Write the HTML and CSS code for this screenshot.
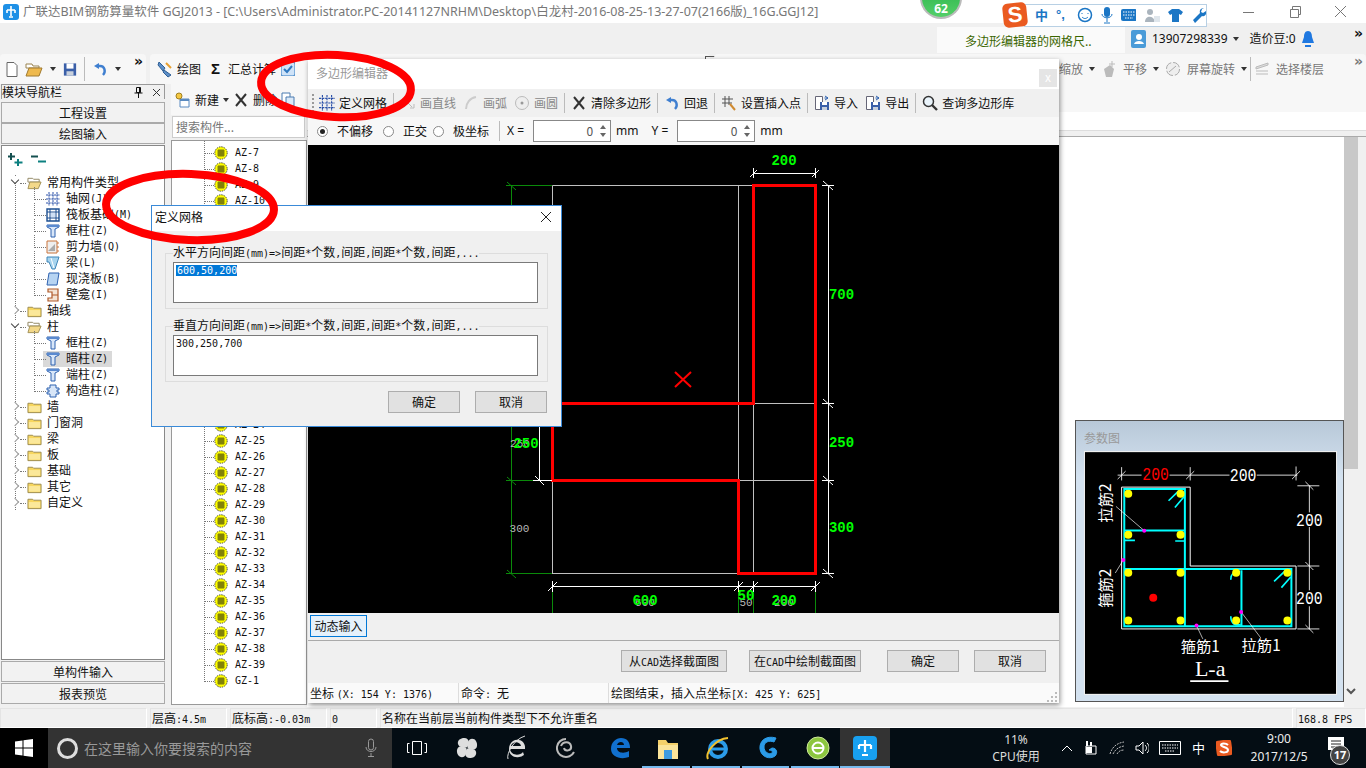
FILE: index.html
```html
<!DOCTYPE html>
<html lang="zh-CN">
<head>
  <meta charset="UTF-8">
  <title>广联达BIM钢筋算量软件 GGJ2013</title>
  <link rel="stylesheet" href="styles.css">
</head>
<body>
<!-- shared icons -->
<svg class="defs" width="0" height="0">
  <symbol id="i-az" viewBox="0 0 14 14"><circle cx="7" cy="7" r="6.2" fill="#ffff00" stroke="#444" stroke-dasharray="1.4 1"/><path d="M3.5 5h7M3.5 7h7M3.5 9h7M5 3.5v7M7 3.5v7M9 3.5v7" stroke="#111" stroke-width="1.1" stroke-dasharray="1 1"/></symbol>
  <symbol id="i-folder" viewBox="0 0 16 14"><path d="M1 3h5l1 1h8v9H1z" fill="#f7d65e" stroke="#9a8a50"/><path d="M2 6h12v6H2z" fill="#fbe89a"/></symbol>
  <symbol id="i-folder-open" viewBox="0 0 16 14"><path d="M1 2h5l1 1h6v3H1z" fill="#fff" stroke="#8f8460"/><path d="M1 13L3 6h12l-3 7z" fill="#f3d889" stroke="#a08f55"/></symbol>
  <symbol id="i-col" viewBox="0 0 14 14"><path d="M1 1h12v2L9 5v8H5V5L1 3z" fill="#d8e6f8" stroke="#2f62b0"/><path d="M1 1h12v2H1z" fill="#5a8ad0"/></symbol>
  <symbol id="i-grid" viewBox="0 0 14 14"><path d="M0 3h14M0 7h14M0 11h14M3 0v14M7 0v14M11 0v14" stroke="#2a50a8" stroke-dasharray="2 .7"/></symbol>
  <symbol id="i-raft" viewBox="0 0 14 14"><path d="M1 1h12v12H1z" fill="none" stroke="#1d4f91" stroke-width="1.4"/><path d="M4 1v12M10 1v12M1 4h12M1 10h12" stroke="#1d4f91"/><path d="M5 5h4v4H5z" fill="#cfe0f5"/></symbol>
  <symbol id="i-wall" viewBox="0 0 14 14"><path d="M1 1h10v12H1z" fill="#eee" stroke="#c9743c"/><path d="M2 11l7-7v7z" fill="#aaa"/><path d="M11 3h2M11 7h2M11 11h2" stroke="#c9743c"/></symbol>
  <symbol id="i-beam" viewBox="0 0 14 14"><path d="M1 1h12L9 13H6L3 6H1z" fill="#a8d4ee" stroke="#3f86b8"/><path d="M5 2l3 10" stroke="#fff"/></symbol>
  <symbol id="i-slab" viewBox="0 0 14 14"><path d="M3 1h10l-2 12H1z" fill="#b7d4f2" stroke="#2f62b0"/></symbol>
  <symbol id="i-niche" viewBox="0 0 14 14"><path d="M2 1h10v12H2v-3h4V4H2z" fill="#f4e4d4" stroke="#b05a2a" stroke-width="1.2"/><path d="M6 7h6" stroke="#b05a2a"/></symbol>
  <symbol id="i-gz" viewBox="0 0 14 14"><path d="M4 1h6v3h3v2h-2v2h2v2h-3v3H4v-3H1V8h2V6H1V4h3z" fill="#d8e6f8" stroke="#2f62b0"/></symbol>
  <symbol id="i-logo" viewBox="0 0 16 16"><rect width="16" height="16" rx="3" fill="#1e90e6"/><path d="M8 2v10M4 6h8M4 6v3M12 6v3M6 13h4" stroke="#fff" stroke-width="1.6" fill="none"/></symbol>
  <symbol id="i-undo" viewBox="0 0 16 16"><path d="M11 14c3-3 2-9-3-9H5" fill="none" stroke="#3f7fd0" stroke-width="2.4"/><path d="M2 5l5-3v6z" fill="#3f7fd0"/></symbol>
  <symbol id="i-x" viewBox="0 0 16 16"><path d="M3 2l10 12M13 2L3 14" stroke="#333" stroke-width="2"/></symbol>
  <symbol id="i-save" viewBox="0 0 16 16"><path d="M1 1h14v14H1z" fill="#3a5fa8"/><path d="M4 1h8v6H4z" fill="#fff"/><path d="M4 10h8v5H4z" fill="#c8d0dc"/></symbol>
  <symbol id="i-disk" viewBox="0 0 16 16"><path d="M1.5 1.5h7v13h-7z" fill="#fff" stroke="#667"/><path d="M6 7h9v8H6z" fill="#3a5fa8"/><path d="M8 7h5v3H8z" fill="#fff"/><path d="M8 12h5v3H8z" fill="#c8d0dc"/><path d="M11 1l3 2-3 2M14 3h-3.500" fill="none" stroke="#2f62b0"/></symbol>
</svg>

<div class="screen">
  <div class="titlebar">
    <svg class="title-logo" width="16" height="16"><use href="#i-logo"/></svg>
    <span class="title-text">广联达BIM钢筋算量软件 GGJ2013 - [C:\Users\Administrator.PC-20141127NRHM\Desktop\白龙村-2016-08-25-13-27-07(2166版)_16G.GGJ12]</span>
    <div class="win-ctrls">
      <svg width="14" height="14"><path d="M1 7.5h11" stroke="#777"/></svg>
      <svg width="14" height="14"><path d="M2.5 4.5h8v8h-8zM4.5 4V1.5h8v8H11" fill="none" stroke="#777"/></svg>
      <svg width="14" height="14"><path d="M1 1l11 11M12 1L1 12" stroke="#777"/></svg>
    </div>
  </div>

  <div class="menuband">
    <div class="hint">多边形编辑器的网格尺..</div>
    <div class="account">
      <svg width="16" height="18"><rect width="15" height="18" rx="2" fill="#4a9bd8"/><circle cx="8" cy="7" r="3" fill="#fff"/><path d="M3 14c1-4 9-4 10 0z" fill="#fff"/></svg>
      <span>13907298339</span><i class="caret"></i><span class="beans">造价豆:0</span>
      <svg width="14" height="18"><path d="M7 1c3 0 4 3 4 6l2 6H1l2-6c0-3 1-6 4-6z" fill="#1f78e0"/><path d="M4 15h6v2H4z" fill="#1f78e0"/></svg>
    </div>
    <span class="more">»</span>
  </div>

  <div class="toolbars">
    <div class="tb-left">
      <svg width="12" height="15"><path d="M1 .5h7l3 3v11H1z" fill="#fff" stroke="#666"/></svg>
      <svg width="18" height="15"><path d="M1 2h6l1 2h6v2H1z" fill="#fff" stroke="#9a8450"/><path d="M1 14l3-8h13l-3 8z" fill="#eeb94e" stroke="#a07a30"/></svg>
      <i class="caret"></i>
      <svg width="14" height="15"><use href="#i-save"/></svg>
      <i class="sep tall"></i>
      <svg width="16" height="16"><use href="#i-undo"/></svg>
      <i class="caret"></i>
      <span class="more small">»</span>
    </div>
    <div class="tb-main">
      <svg width="18" height="18"><path d="M3 2l6 6-2 3-5-6zM8 10l7 5-3 2-5-5z" fill="#5d8fc8" stroke="#2f5f95"/><path d="M10 3l5 5" stroke="#e8a030" stroke-width="2"/></svg>
      <span class="tb-draw">绘图</span>
      <b class="sigma">Σ</b>
      <span>汇总计算</span>
      <svg width="14" height="14"><rect width="14" height="14" rx="2" fill="#cfe3f8" stroke="#2f78c0"/><path d="M3 7l3 3 5-6" stroke="#2f78c0" stroke-width="2" fill="none"/></svg>
      <span class="tb-box"></span>
    </div>
    <div class="tb-right">
      <span>缩放</span><i class="caret"></i>
      <svg width="16" height="18"><path d="M5 17L3 9l6-4 4 4-2 8z" fill="#bbb"/><path d="M11 1v6M8 4h6" stroke="#bbb"/></svg>
      <span>平移</span><i class="caret"></i>
      <svg width="16" height="16"><circle cx="8" cy="8" r="6.5" fill="#eee" stroke="#aaa" stroke-dasharray="8 2"/><path d="M4 11l7-6" stroke="#aaa"/></svg>
      <span>屏幕旋转</span><i class="caret"></i>
      <i class="sep tall"></i>
      <svg width="16" height="16"><path d="M2 6l12-4v2L2 8zM2 10h12M2 13h12" stroke="#bbb" fill="#ddd"/></svg>
      <span>选择楼层</span>
      <span class="more small">»</span>
    </div>
  </div>

  <div class="workspace">
    <aside class="nav">
      <div class="nav-head">
        <span>模块导航栏</span>
        <span class="pin">
          <svg width="9" height="11"><path d="M2.500 .5h4v5h-4zM.5 6h8M4.500 6v5" fill="none" stroke="#111"/><path d="M5 1h1v4H5z" fill="#111"/></svg>
          <svg width="9" height="9"><path d="M1 1l7 7M8 1L1 8" stroke="#333"/></svg>
        </span>
      </div>
      <div class="nav-btn first">工程设置</div>
      <div class="nav-btn">绘图输入</div>
      <div class="nav-tree">
        <div class="plusminus">
          <svg width="16" height="14"><path d="M4 1v7M1 4.5h7" stroke="#145050" stroke-width="2"/><path d="M11 7v7M7.5 10.5h8" stroke="#0d8080" stroke-width="2"/></svg>
          <svg width="17" height="14"><path d="M1 4.5h7" stroke="#145050" stroke-width="2"/><path d="M8 9.5h8" stroke="#0d8080" stroke-width="2"/></svg>
        </div>
        <ul class="tree">
          <li class="n1"><i class="chev open"></i><svg class="ic"><use href="#i-folder-open"/></svg>常用构件类型</li>
          <li class="n2"><svg class="ic"><use href="#i-grid"/></svg>轴网<span class="lat">(J)</span></li>
          <li class="n2"><svg class="ic"><use href="#i-raft"/></svg>筏板基础<span class="lat">(M)</span></li>
          <li class="n2"><svg class="ic"><use href="#i-col"/></svg>框柱<span class="lat">(Z)</span></li>
          <li class="n2"><svg class="ic"><use href="#i-wall"/></svg>剪力墙<span class="lat">(Q)</span></li>
          <li class="n2"><svg class="ic"><use href="#i-beam"/></svg>梁<span class="lat">(L)</span></li>
          <li class="n2"><svg class="ic"><use href="#i-slab"/></svg>现浇板<span class="lat">(B)</span></li>
          <li class="n2"><svg class="ic"><use href="#i-niche"/></svg>壁龛<span class="lat">(I)</span></li>
          <li class="n1"><i class="chev"></i><svg class="ic"><use href="#i-folder"/></svg>轴线</li>
          <li class="n1"><i class="chev open"></i><svg class="ic"><use href="#i-folder-open"/></svg>柱</li>
          <li class="n2"><svg class="ic"><use href="#i-col"/></svg>框柱<span class="lat">(Z)</span></li>
          <li class="n2 selected"><svg class="ic"><use href="#i-col"/></svg>暗柱<span class="lat">(Z)</span></li>
          <li class="n2"><svg class="ic"><use href="#i-col"/></svg>端柱<span class="lat">(Z)</span></li>
          <li class="n2"><svg class="ic"><use href="#i-gz"/></svg>构造柱<span class="lat">(Z)</span></li>
          <li class="n1"><i class="chev"></i><svg class="ic"><use href="#i-folder"/></svg>墙</li>
          <li class="n1"><i class="chev"></i><svg class="ic"><use href="#i-folder"/></svg>门窗洞</li>
          <li class="n1"><i class="chev"></i><svg class="ic"><use href="#i-folder"/></svg>梁</li>
          <li class="n1"><i class="chev"></i><svg class="ic"><use href="#i-folder"/></svg>板</li>
          <li class="n1"><i class="chev"></i><svg class="ic"><use href="#i-folder"/></svg>基础</li>
          <li class="n1"><i class="chev"></i><svg class="ic"><use href="#i-folder"/></svg>其它</li>
          <li class="n1"><i class="chev"></i><svg class="ic"><use href="#i-folder"/></svg>自定义</li>
        </ul>
      </div>
      <div class="nav-btn bottom">单构件输入</div>
      <div class="nav-btn bottom">报表预览</div>
    </aside>

    <section class="comps">
      <div class="comp-tools">
        <svg width="16" height="16"><path d="M5 7h9v8H5z" fill="#fff" stroke="#5a8ac0"/><path d="M5 7h9v2H5z" fill="#5a8ac0"/><circle cx="4" cy="4" r="3" fill="#f5c842" stroke="#a08020"/></svg>
        <span>新建</span><i class="caret"></i>
        <svg width="16" height="16"><use href="#i-x"/></svg>
        <span>删除</span>
        <svg width="14" height="15"><path d="M1 1h8v10H1z" fill="#fff" stroke="#4a7ab0"/><path d="M5 5h8v9H5z" fill="#dbe8f7" stroke="#4a7ab0"/></svg>
      </div>
      <div class="search">搜索构件...</div>
      <ul class="az-list">
        <li><svg class="az"><use href="#i-az"/></svg>AZ-7</li>
        <li><svg class="az"><use href="#i-az"/></svg>AZ-8</li>
        <li><svg class="az"><use href="#i-az"/></svg>AZ-9</li>
        <li><svg class="az"><use href="#i-az"/></svg>AZ-10</li>
        <li><svg class="az"><use href="#i-az"/></svg>AZ-11</li>
        <li><svg class="az"><use href="#i-az"/></svg>AZ-12</li>
        <li><svg class="az"><use href="#i-az"/></svg>AZ-13</li>
        <li><svg class="az"><use href="#i-az"/></svg>AZ-14</li>
        <li><svg class="az"><use href="#i-az"/></svg>AZ-15</li>
        <li><svg class="az"><use href="#i-az"/></svg>AZ-16</li>
        <li><svg class="az"><use href="#i-az"/></svg>AZ-17</li>
        <li><svg class="az"><use href="#i-az"/></svg>AZ-18</li>
        <li><svg class="az"><use href="#i-az"/></svg>AZ-19</li>
        <li><svg class="az"><use href="#i-az"/></svg>AZ-20</li>
        <li><svg class="az"><use href="#i-az"/></svg>AZ-21</li>
        <li><svg class="az"><use href="#i-az"/></svg>AZ-22</li>
        <li><svg class="az"><use href="#i-az"/></svg>AZ-23</li>
        <li><svg class="az"><use href="#i-az"/></svg>AZ-24</li>
        <li><svg class="az"><use href="#i-az"/></svg>AZ-25</li>
        <li><svg class="az"><use href="#i-az"/></svg>AZ-26</li>
        <li><svg class="az"><use href="#i-az"/></svg>AZ-27</li>
        <li><svg class="az"><use href="#i-az"/></svg>AZ-28</li>
        <li><svg class="az"><use href="#i-az"/></svg>AZ-29</li>
        <li><svg class="az"><use href="#i-az"/></svg>AZ-30</li>
        <li><svg class="az"><use href="#i-az"/></svg>AZ-31</li>
        <li><svg class="az"><use href="#i-az"/></svg>AZ-32</li>
        <li><svg class="az"><use href="#i-az"/></svg>AZ-33</li>
        <li><svg class="az"><use href="#i-az"/></svg>AZ-34</li>
        <li><svg class="az"><use href="#i-az"/></svg>AZ-35</li>
        <li><svg class="az"><use href="#i-az"/></svg>AZ-36</li>
        <li><svg class="az"><use href="#i-az"/></svg>AZ-37</li>
        <li><svg class="az"><use href="#i-az"/></svg>AZ-38</li>
        <li><svg class="az"><use href="#i-az"/></svg>AZ-39</li>
        <li><svg class="az"><use href="#i-az"/></svg>GZ-1</li>
      </ul>
    </section>

    <section class="view">
      <div class="view-band"></div>
      <div class="view-strip"></div>
      <div class="view-main">
        <div class="view-white"></div>
        <div class="scroll"><div class="thumb"></div><svg width="14" height="10"><path d="M3 2l4 4 4-4" fill="none" stroke="#555" stroke-width="2"/></svg></div>
      </div>
    </section>
  </div>

  <div class="statusbar">
    <span class="cell c-empty"></span>
    <span class="cell c-h">层高<span class="lat">:4.5m</span></span>
    <span class="cell c-b">底标高<span class="lat">:-0.03m</span></span>
    <span class="cell c-z"><span class="lat">0</span></span>
    <span class="cell c-msg">名称在当前层当前构件类型下不允许重名</span>
    <span class="cell c-fps"><span class="lat">168.8 FPS</span></span>
  </div>

  <div class="taskbar">
    <div class="start"><svg width="18" height="18"><path d="M0 2.5l7.5-1v7H0zM8.5 1.300l9.500-1.300v8.500H8.500zM0 9.500h7.500v7l-7.500-1zM8.500 9.500H18V18l-9.500-1.300z" fill="#fff"/></svg></div>
    <div class="task-search">
      <i class="cortana"></i>
      <span>在这里输入你要搜索的内容</span>
      <svg width="12" height="20"><rect x="3.5" y="1" width="5" height="11" rx="2.5" fill="none" stroke="#999"/><path d="M1 9c0 6 10 6 10 0M6 15v3M3 18.5h6" fill="none" stroke="#999"/></svg>
    </div>
    <div class="task-icons">
      <span class="tk"><svg width="20" height="14"><path d="M5.500 .5h9v13h-9zM2.500 2.500H.5v9h2M17.500 2.500h2v9h-2" fill="none" stroke="#fff"/></svg></span>
      <span class="tk"><svg width="22" height="22" viewBox="0 0 24 24" fill="#dedede">
        <path id="blade" d="M11.500 11.500C7 12 2 10.500 2 6.500S6 1 9 1s5 2 5 5c0 2-1 4-2.500 5.500z"/>
        <path d="M12.500 11.500C12 7 13.500 2 17.500 2S23 6 23 9s-2 5-5 5c-2 0-4-1-5.500-2.500z"/>
        <path d="M12.500 12.500C17 12 22 13.500 22 17.500S18 23 15 23s-5-2-5-5c0-2 1-4 2.500-5.500z"/>
        <path d="M11.500 12.500C12 17 10.500 22 6.500 22S1 18 1 15s2-5 5-5c2 0 4 1 5.500 2.500z"/>
      </svg></span>
      <span class="tk"><svg width="22" height="26"><path d="M18 17c-3 4-12 4-13-3h15c1-8-7-11-12-8-3 2-4 5-4 8 0 6 5 9 10 8 2 0 3-1 5-2zM6 11c1-5 9-5 10 0z" fill="#ddd"/><path d="M3 24C1 19 9 4 20 1" fill="none" stroke="#ddd"/></svg></span>
      <span class="tk"><svg width="20" height="24"><path d="M10 3a9 9 0 1 0 8 13M5 10c2-5 9-5 10 0s-6 6-7 2" fill="none" stroke="#bbb" stroke-width="2"/></svg></span>
      <span class="tk nudge"><svg width="22" height="24"><path d="M2 13C2 6 7 2 12 2c6 0 9 4 9 10H8c0 5 7 6 12 3v6c-8 3-18 0-18-8zM8 9h7c0-4-6-4-7 0z" fill="#1170cf"/></svg></span>
      <span class="tk on"><svg width="24" height="24"><path d="M2 4h8l2 3h10v16H2z" fill="#f4d06a"/><path d="M2 9h20v14H2z" fill="#fbe49a"/><path d="M8 14h8v9H8z" fill="#3f9be0"/></svg></span>
      <span class="tk on"><svg width="26" height="26"><circle cx="13" cy="14" r="8" fill="none" stroke="#2b9be8" stroke-width="4"/><path d="M6 14h14" stroke="#2b9be8" stroke-width="3"/><path d="M3 24C0 18 10 4 23 3" fill="none" stroke="#f2c230" stroke-width="2"/></svg></span>
      <span class="tk on"><svg width="24" height="26"><path d="M20 3C10 0 3 6 4 14s10 11 15 7c3-3 2-8-3-8l-3 2c3 0 4 2 3 3-3 2-8-1-8-6s5-7 10-5z" fill="#2b9be8" stroke="#2b9be8"/></svg></span>
      <span class="tk on"><svg width="26" height="26"><circle cx="13" cy="13" r="11" fill="#8cc63f" stroke="#cde79a"/><circle cx="13" cy="13" r="5.500" fill="none" stroke="#fff" stroke-width="2"/><path d="M7 13h12" stroke="#fff" stroke-width="2"/></svg></span>
      <span class="tk active"><svg width="24" height="24"><rect width="24" height="24" rx="4" fill="#18a0f0"/><path d="M12 4v12M6 9h12M6 9v4M18 9v4M9 19h6" stroke="#fff" stroke-width="2.2" fill="none"/></svg></span>
    </div>
    <div class="cpu">11%<br>CPU使用</div>
    <div class="tray">
      <svg width="12" height="8"><path d="M1 7l5-5 5 5" fill="none" stroke="#fff"/></svg>
      <svg width="16" height="14"><path d="M3 5h10v8H3z" fill="none" stroke="#fff"/><path d="M3 6h6v6H3zM3 0h2v5H3zM7 1h2v4H7z" fill="#fff"/></svg>
      <svg width="16" height="14"><path d="M1 13C3 6 8 2 15 1M4 13c2-4 5-7 11-8M8 13c1-2 3-4 7-4" fill="none" stroke="#bbb" stroke-dasharray="2 1"/></svg>
      <svg width="14" height="14"><path d="M1 5h3l4-4v12L4 9H1z" fill="none" stroke="#fff"/><path d="M10 4c2 2 2 4 0 6M12 2c3 3 3 7 0 10" fill="none" stroke="#fff"/></svg>
      <svg width="22" height="14"><path d="M.5 .5h21v13H.5z" fill="none" stroke="#fff"/><path d="M3 4h16M3 7h16M6 10h10" stroke="#fff" stroke-dasharray="1.5 1"/></svg>
      <span class="tray-zh">中</span>
      <svg width="16" height="16"><rect width="16" height="16" rx="3" fill="#ea5a20" transform="rotate(-8 8 8)"/><path d="M12 5c-2-2-7-2-7 0s7 2 7 5-6 3-8 1" fill="none" stroke="#fff" stroke-width="2"/></svg>
    </div>
    <div class="clock">9:00<br>2017/12/5</div>
    <div class="notify">
      <svg width="16" height="16"><path d="M0 0h16v13H0z" fill="#fff"/><path d="M3 4h10M3 7h10M3 10h7" stroke="#222"/></svg>
      <b class="notify-n">17</b>
    </div>
  </div>

  <!-- floating parameter picture -->
  <div class="param">
    <div class="param-title">参数图</div>
    <svg class="param-fig" width="251" height="242" viewBox="42 107 754 726">
      <rect x="42" y="107" width="754" height="726" fill="#000"/>
      <path d="M152 212H358V449H676V638H152Z" fill="none" stroke="#fff" stroke-width="3"/>
      <path d="M160 218H342V458H662V630H160ZM160 342H342M160 458H342M342 458V630M512 462V630" fill="none" stroke="#00ffff" stroke-width="6"/>
      <path d="M293 253L325 222M312 273L340 240M610 495L645 462M632 514L660 482M160 372H192M313 374H340M480 490C480 470 490 465 508 465M480 600C480 625 495 628 510 625" fill="none" stroke="#00ffff" stroke-width="5"/>
      <g fill="#ffff00">
        <circle cx="172" cy="232" r="12"/><circle cx="329" cy="232" r="12"/><circle cx="172" cy="355" r="12"/><circle cx="329" cy="355" r="12"/>
        <circle cx="172" cy="469" r="12"/><circle cx="329" cy="469" r="12"/><circle cx="496" cy="469" r="12"/><circle cx="650" cy="469" r="12"/>
        <circle cx="172" cy="613" r="12"/><circle cx="329" cy="613" r="12"/><circle cx="496" cy="613" r="12"/><circle cx="650" cy="613" r="12"/>
      </g>
      <circle cx="247" cy="544" r="12" fill="#ff0000"/>
      <path d="M135 270L220 343M157 431L133 470M377 628L396 668M511 587L570 665" stroke="#fff" stroke-width="2"/>
      <g fill="#ff00ff"><circle cx="220" cy="343" r="6"/><circle cx="157" cy="431" r="6"/><circle cx="377" cy="628" r="6"/><circle cx="511" cy="587" r="6"/></g>
      <path d="M140 176H212M296 176H476M558 176H680M152 152V192M358 152V192M676 150V192M140 188L164 164M346 188L370 164M664 188L688 164M716 208V288M716 332V522M716 570V638M680 208H746M680 449H746M680 638H746M704 196L728 220M704 437L728 461M704 626L728 650" fill="none" stroke="#fff" stroke-width="2.5"/>
      <path d="M358 795H473" stroke="#fff" stroke-width="5"/>
      <g class="fig-num" fill="#fff" text-anchor="middle">
        <text x="254" y="190" fill="#ff0000" textLength="80" lengthAdjust="spacingAndGlyphs">200</text>
        <text x="517" y="194" textLength="80" lengthAdjust="spacingAndGlyphs">200</text>
        <text x="716" y="328" textLength="80" lengthAdjust="spacingAndGlyphs">200</text>
        <text x="716" y="564" textLength="80" lengthAdjust="spacingAndGlyphs">200</text>
      </g>
      <g class="fig-cjk" fill="#fff" text-anchor="middle">
        <text x="388" y="706">箍筋1</text>
        <text x="571" y="704">拉筋1</text>
        <text transform="translate(120 260) rotate(-90)">拉筋2</text>
        <text transform="translate(120 516) rotate(-90)">箍筋2</text>
      </g>
      <text class="fig-label" x="418" y="780" fill="#fff" text-anchor="middle">L-a</text>
    </svg>
  </div>

  <!-- polygon editor window -->
  <div class="editor">
    <div class="ed-title"><span>多边形编辑器</span><span class="ed-close">x</span></div>
    <div class="ed-tools">
      <i class="grip"></i>
      <span class="tool"><svg width="16" height="16"><use href="#i-grid"/></svg>定义网格</span>
      <i class="sep"></i>
      <span class="tool off"><svg width="16" height="16"><path d="M3 3l9 9M10 13h4v-4" fill="none" stroke="#bbb"/></svg>画直线</span>
      <span class="tool off"><svg width="16" height="16"><path d="M3 14C3 8 7 3 13 2" fill="none" stroke="#ccc" stroke-width="2"/></svg>画弧</span>
      <span class="tool off"><svg width="16" height="16"><circle cx="8" cy="8" r="6.5" fill="#eee" stroke="#bbb"/><circle cx="8" cy="8" r="1.5" fill="#999"/></svg>画圆</span>
      <i class="sep"></i>
      <span class="tool"><svg width="16" height="16"><use href="#i-x"/></svg>清除多边形</span>
      <i class="sep"></i>
      <span class="tool"><svg width="16" height="16"><use href="#i-undo"/></svg>回退</span>
      <i class="sep"></i>
      <span class="tool"><svg width="16" height="16"><path d="M4 1v11M8 1v9M1 4h11M1 8h10" stroke="#555"/><path d="M9 9l5 6" stroke="#d08a30" stroke-width="2"/></svg>设置插入点</span>
      <i class="sep"></i>
      <span class="tool"><svg width="16" height="16"><use href="#i-disk"/></svg>导入</span>
      <span class="tool"><svg width="16" height="16"><use href="#i-disk"/></svg>导出</span>
      <i class="sep"></i>
      <span class="tool"><svg width="16" height="16"><circle cx="6.5" cy="6.5" r="5" fill="#eaf4fb" stroke="#333" stroke-width="1.5"/><path d="M10 10l5 5" stroke="#333" stroke-width="2.4"/></svg>查询多边形库</span>
    </div>
    <div class="ed-opts">
      <span class="radio on"></span><span class="opt">不偏移</span>
      <span class="radio"></span><span class="opt tight">正交</span>
      <span class="radio"></span><span class="opt">极坐标</span>
      <i class="sep"></i>
      <span class="xy">X =</span>
      <div class="spin">0<span class="spin-btns"><i class="up"></i><i class="down"></i></span></div>
      <span class="xy">mm</span>
      <span class="xy y-label">Y =</span>
      <div class="spin">0<span class="spin-btns"><i class="up"></i><i class="down"></i></span></div>
      <span class="xy">mm</span>
    </div>
    <svg class="ed-canvas" width="751" height="468" viewBox="308 145 751 468">
      <rect x="308" y="145" width="751" height="468" fill="#000"/>
      <path d="M511.5 185V573M506 185.5H552M506 480.5H539M506 573.5H552M552.5 590V613M738.5 590V613M753.5 590V613M815.5 590V613M507 182L516 190M507 477L516 485M507 570L516 578" stroke="#0a8a0a" fill="none"/>
      <path d="M552.5 185.5H753M552.5 185.5V573M738.5 185.5V573M753.5 403V573M552 573.5H739M739 480.5H815M753 403.5H815" stroke="#c0c0c0" fill="none"/>
      <path d="M753.5 185.5H815.5V573.5H738.5V480.5H552.5V403.5H753.5Z" stroke="#ff0000" stroke-width="3" fill="none"/>
      <path d="M753 173.5H815M753.5 168V178M815.5 168V178M750 177L757 170M812 177L819 170M828.5 185V573M822 185.5H834M822 403.5H834M822 480.5H834M822 573.5H834M823 181L833 190M823 399L833 408M823 476L833 485M823 569L833 578M552 586.5H815M552.5 581V592M738.5 581V592M753.5 581V592M815.5 581V592M548 591L557 582M734 591L743 582M749 591L758 582M811 591L820 582M539.5 427V480M533 480.5H552M535 476L544 485" stroke="#fff" fill="none"/>
      <path d="M675 372L691 387M691 372L675 387" stroke="#ff0000" stroke-width="2"/>
      <g class="dim-gray" fill="#b8b8b8" text-anchor="middle">
        <text x="520" y="447">250</text><text x="519.5" y="532">300</text><text x="645" y="606">600</text><text x="746" y="606">50</text><text x="784" y="606">200</text>
      </g>
      <g class="dim-green" fill="#00ff00" text-anchor="middle">
        <text x="784" y="165">200</text><text x="841.5" y="299">700</text><text x="841.5" y="447">250</text><text x="841.5" y="532">300</text>
        <text x="526" y="448">250</text><text x="645" y="605">600</text><text x="746" y="600">50</text><text x="784" y="605">200</text>
      </g>
    </svg>
    <div class="ed-dyn"><span class="dyn-btn">动态输入</span></div>
    <div class="ed-actions">
      <span class="btn b-cad1">从<span class="lat">CAD</span>选择截面图</span>
      <span class="btn b-cad2">在<span class="lat">CAD</span>中绘制截面图</span>
      <span class="btn b-ok">确定</span>
      <span class="btn b-ok">取消</span>
    </div>
    <div class="ed-status">
      <span class="cell e-a">坐标 <span class="lat">(X: 154 Y: 1376)</span></span>
      <span class="cell e-b">命令<span class="lat">: </span>无</span>
      <span class="cell e-c">绘图结束，插入点坐标<span class="lat">[X: 425 Y: 625]</span></span>
      <svg class="size-grip" width="11" height="11"><path d="M9 1h2v2H9zM5 5h2v2H5zM9 5h2v2H9zM1 9h2v2H1zM5 9h2v2H5zM9 9h2v2H9z" fill="#bbb"/></svg>
    </div>
  </div>

  <!-- define grid dialog -->
  <div class="dialog">
    <div class="dlg-title"><span>定义网格</span><svg width="12" height="12"><path d="M1 1l10 10M11 1L1 11" stroke="#222"/></svg></div>
    <div class="dlg-body">
      <fieldset class="grp">
        <legend>水平方向间距<span class="lat">(mm)=&gt;</span>间距<span class="lat">*</span>个数<span class="lat">,</span>间距<span class="lat">,</span>间距<span class="lat">*</span>个数<span class="lat">,</span>间距<span class="lat">,...</span></legend>
        <div class="area"><span class="picked">600,50,200</span></div>
      </fieldset>
      <fieldset class="grp">
        <legend>垂直方向间距<span class="lat">(mm)=&gt;</span>间距<span class="lat">*</span>个数<span class="lat">,</span>间距<span class="lat">,</span>间距<span class="lat">*</span>个数<span class="lat">,</span>间距<span class="lat">,...</span></legend>
        <div class="area">300,250,700</div>
      </fieldset>
      <div class="dlg-btns"><span class="btn b-ok">确定</span><span class="btn b-ok">取消</span></div>
    </div>
  </div>

  <!-- red marks drawn over the screenshot -->
  <svg class="marks" width="1366" height="768">
    <ellipse cx="336" cy="86" rx="75" ry="31" transform="rotate(3 336 86)"/>
    <ellipse cx="190" cy="207" rx="84" ry="33" transform="rotate(2 190 207)"/>
  </svg>

  <!-- desktop widgets above the window -->
  <div class="badge">62</div>
  <div class="ime">
    <span class="ime-s">S</span>
    <span class="ime-bar">
      <b>中</b><b class="ime-dot">°,</b>
      <svg class="ime-smile" width="16" height="16"><circle cx="8" cy="8" r="6.5" fill="none" stroke="#1b76c5" stroke-width="1.5"/><path d="M5 6v1M11 6v1M5 10c2 2 4 2 6 0" stroke="#1b76c5" fill="none"/></svg>
      <svg width="12" height="18"><rect x="3" y="1" width="6" height="10" rx="3" fill="#1b76c5"/><path d="M1 8c0 5 10 5 10 0M6 12v4M3 17h6" fill="none" stroke="#1b76c5"/></svg>
      <svg width="16" height="12"><rect width="16" height="12" rx="2" fill="#1b76c5"/><path d="M2 3h12M2 6h12M4 9h8" stroke="#fff" stroke-dasharray="1.5 1"/></svg>
      <svg width="16" height="16"><circle cx="6" cy="5" r="3" fill="#aab4bd"/><path d="M1 15c0-7 9-7 10 0z" fill="#aab4bd"/><path d="M10 9h6v6h-6z" fill="#dfe6ec"/></svg>
      <svg width="15" height="15"><path d="M4 1h7l4 3-2 3-2-1v8H4V6L2 7 0 4z" fill="#1b76c5"/></svg>
      <svg width="15" height="17"><path d="M13 1c-3 0-5 2-4 5L2 13l2 3 7-7c3 1 5-2 4-5l-3 2-2-1 1-3z" fill="#1b76c5"/></svg>
    </span>
  </div>
</div>
</body>
</html>
```

FILE: styles.css
```css
* { box-sizing: border-box; }
html, body { margin: 0; padding: 0; background: #f0f0f0; }
.defs { position: absolute; }
ul { list-style: none; margin: 0; padding: 0; }

.screen {
  position: relative;
  width: 1366px;
  height: 768px;
  overflow: hidden;
  display: flex;
  flex-direction: column;
  font-family: "DejaVu Sans Mono", "Noto Sans CJK SC", monospace;
  font-size: 12px;
  line-height: 16px;
  color: #111;
}
/* latin runs in the old bitmap look are half the width of a CJK glyph */
.lat { font-family: "DejaVu Sans Mono", monospace; font-size: 10px; }

/* title */
.titlebar {
  height: 23px;
  background: #fff;
  display: flex;
  align-items: center;
  flex: none;
}
.title-logo { margin: 0 4px 0 3px; }
.title-text {
  font-family: "Noto Sans", "Noto Sans CJK SC", sans-serif;
  font-size: 12.5px;
  color: #777;
  white-space: nowrap;
}
.win-ctrls {
  margin-left: auto;
  display: flex;
  gap: 32px;
  padding-right: 18px;
}

/* band above toolbars */
.menuband {
  height: 31px;
  flex: none;
  background: #f0f0f0;
  position: relative;
  display: flex;
  justify-content: flex-end;
  align-items: center;
}
.hint {
  width: 188px;
  height: 26px;
  background: #fafafa;
  color: #3a6600;
  padding: 6px 0 0 28px;
  font-family: "Noto Sans CJK SC", sans-serif;
  margin-top: 3px;
}
.account {
  display: flex;
  align-items: center;
  gap: 5px;
  margin-left: 6px;
  width: 235px;
  font-family: "Noto Sans", "Noto Sans CJK SC", sans-serif;
}
.beans { margin-left: 6px; }
.more {
  position: absolute;
  right: 3px;
  top: 4px;
  font-size: 14px;
  line-height: 12px;
  font-weight: bold;
  font-family: "DejaVu Sans", sans-serif;
}
.more.small { top: 1px; }
.caret {
  width: 0;
  height: 0;
  border: 3px solid transparent;
  border-top: 4px solid #333;
  border-bottom: 0;
  flex: none;
}
.sep {
  width: 1px;
  height: 20px;
  background: #bbb;
  flex: none;
}
.sep.tall { height: 24px; }

/* toolbars */
.toolbars {
  height: 30px;
  flex: none;
  display: flex;
  background: #f0f0f0;
  font-family: "Noto Sans CJK SC", sans-serif;
}
.tb-left, .tb-main, .tb-right {
  display: flex;
  align-items: center;
  background: #f7f7f7;
  border-radius: 4px 4px 0 0;
  position: relative;
}
.tb-left {
  width: 146px;
  padding-left: 6px;
  gap: 7px;
}
.tb-main {
  width: 560px;
  margin-left: 4px;
  padding-left: 6px;
  gap: 5px;
}
.sigma { margin-left: 5px; margin-right: 3px; font-family: "Liberation Sans", sans-serif; font-size: 15px; }
.tb-draw { margin-left: -2px; }
.tb-box {
  position: absolute;
  left: 555px;
  top: 2px;
  width: 62px;
  height: 12px;
  border: 1px solid #555;
  border-bottom: 0;
}
.tb-right {
  flex: 1;
  margin-left: 4px;
  justify-content: flex-end;
  gap: 6px;
  padding-right: 42px;
  color: #777;
}
.tb-right .sep { margin: 0 -3px; }

/* workspace */
.workspace {
  height: 623px;
  flex: none;
  display: flex;
  background: #f0f0f0;
}
.nav {
  width: 165px;
  flex: none;
  display: flex;
  flex-direction: column;
  padding: 0 0 3px 1px;
  font-family: "Noto Sans CJK SC", sans-serif;
}
.nav-head {
  height: 15px;
  display: flex;
  justify-content: space-between;
  border: 1px solid #999;
  border-bottom: 0;
  line-height: 13px;
  background: #f0f0f0;
  padding-right: 3px;
}
.pin { display: flex; align-items: center; gap: 9px; }
.nav-btn {
  height: 21px;
  flex: none;
  border: 1px solid #aaa;
  background: #f2f2f2;
  text-align: center;
  line-height: 20px;
}
.nav-btn.first { margin-top: 3px; }
.nav-btn.bottom { margin-top: 1px; }
.nav-tree {
  flex: 1;
  margin-top: 1px;
  background: #fff;
  border: 1px solid #888;
  overflow: hidden;
}
.plusminus {
  display: flex;
  gap: 7px;
  padding: 6px 0 0 5px;
  height: 29px;
}
.tree {
  font-family: "DejaVu Sans Mono", "Noto Sans CJK SC", monospace;
  background: repeating-linear-gradient(#777 0 1px, transparent 1px 2px) 13px 0 / 1px 100% no-repeat;
}
.tree li {
  height: 16px;
  display: flex;
  align-items: center;
  white-space: nowrap;
  position: relative;
}
.tree .n1 { padding-left: 25px; }
.tree .n2 { padding-left: 44px; }
.ic { width: 15px; height: 14px; margin-right: 5px; flex: none; }
.n2 .ic { width: 14px; height: 14px; margin-right: 6px; }
.n2::before {
  content: "";
  position: absolute;
  left: 32px;
  top: -4px;
  width: 11px;
  height: 12px;
  border-left: 1px dotted #777;
  border-bottom: 1px dotted #777;
}
.n1::before {
  content: "";
  position: absolute;
  left: 18px;
  top: 8px;
  width: 6px;
  border-bottom: 1px dotted #777;
}
.chev {
  position: absolute;
  left: 10px;
  top: 4px;
  width: 6px;
  height: 6px;
  background: #fff;
  border-right: 1.5px solid #999;
  border-bottom: 1.5px solid #999;
  transform: rotate(-45deg);
}
.chev.open { transform: rotate(45deg); border-color: #444; top: 2px; }
.selected { background: linear-gradient(#d9d9d9, #d9d9d9) 41px 0 / 69px 16px no-repeat; }

/* component list */
.comps {
  width: 136px;
  margin-left: 6px;
  padding-bottom: 2px;
  flex: none;
  display: flex;
  flex-direction: column;
  font-family: "Noto Sans CJK SC", sans-serif;
}
.comp-tools {
  height: 31px;
  display: flex;
  align-items: center;
  gap: 4px;
  padding-left: 4px;
  background: #f7f7f7;
}
.search {
  height: 22px;
  margin: 1px 2px 0 1px;
  padding: 2px 3px;
  background: #fff;
  border: 1px solid #ccc;
  color: #777;
}
.az-list {
  flex: 1;
  margin-top: 2px;
  background: #fff;
  border: 1px solid #999;
  padding-top: 4px;
  font-family: "DejaVu Sans Mono", monospace;
  font-size: 10px;
  overflow: hidden;
}
.az-list li {
  height: 16px;
  padding-left: 42px;
  display: flex;
  align-items: center;
  position: relative;
}
.az-list li::before {
  content: "";
  position: absolute;
  left: 32px;
  top: -8px;
  width: 9px;
  height: 16px;
  border-left: 1px dotted #777;
  border-bottom: 1px dotted #777;
}
.az { width: 14px; height: 14px; margin-right: 7px; flex: none; }

/* right view */
.view {
  flex: 1;
  display: flex;
  flex-direction: column;
  min-width: 0;
}
.view-band { height: 28px; background: #f7f7f7; }
.view-strip { height: 19px; background: #fff; border-bottom: 1px solid #ddd; }
.view-main {
  flex: 1;
  display: flex;
  margin-top: 5px;
  border-top: 1px solid #aaa;
}
.view-white { flex: 1; background: #fff; }
.scroll {
  width: 22px;
  padding: 0 8px 10px 0;
  background: #f0f0f0;
  display: flex;
  flex-direction: column;
  justify-content: space-between;
}
.thumb { height: 332px; background: #c8c8c8; }

/* status */
.statusbar {
  height: 21px;
  flex: none;
  display: flex;
  background: #f0f0f0;
  gap: 3px;
  padding-top: 1px;
  font-family: "Noto Sans CJK SC", sans-serif;
}
.cell {
  display: block;
  border: 1px solid #e4e4e4;
  border-right-color: #fff;
  border-bottom-color: #fff;
  line-height: 18px;
  padding-left: 1px;
  white-space: nowrap;
  overflow: hidden;
}
.c-empty { width: 147px; }
.c-h { width: 77px; }
.c-b { width: 97px; }
.c-z { width: 47px; }
.c-msg { flex: 1; }
.c-fps { width: 70px; }

/* taskbar */
.taskbar {
  height: 40px;
  flex: none;
  display: flex;
  align-items: center;
  background: #040d14;
  color: #fff;
}
.start {
  width: 48px;
  height: 40px;
  background: #000;
  display: flex;
  align-items: center;
  justify-content: center;
}
.task-search {
  width: 344px;
  height: 40px;
  background: #333;
  display: flex;
  align-items: center;
  padding-left: 9px;
  color: #999;
  font-family: "Noto Sans CJK SC", sans-serif;
  font-size: 14px;
}
.task-search span { width: 281px; }
.cortana {
  width: 21px;
  height: 21px;
  border: 3px solid #ddd;
  border-radius: 50%;
  margin-right: 6px;
}
.task-icons {
  display: flex;
  width: 498px;
  height: 40px;
}
.tk {
  width: 49.8px;
  height: 40px;
  display: flex;
  align-items: center;
  justify-content: center;
}
.tk.nudge svg { margin-left: 7px; }
.tk.on { box-shadow: inset 0 -2px 0 #76b9ed; margin: 0 1px; width: 47.8px; }
.tk.on svg { margin-left: 5px; }
.tk.active { background: #333; box-shadow: inset 0 -2px 0 #76b9ed; }
.cpu {
  width: 90px;
  margin-left: 81px;
  text-align: center;
  font-family: "Noto Sans", "Noto Sans CJK SC", sans-serif;
  line-height: 17px;
  color: #ddd;
}
.tray {
  display: flex;
  align-items: center;
  gap: 10px;
}
.tray-zh { font-family: "Noto Sans CJK SC", sans-serif; font-size: 13px; margin: 0 1px; }
.clock {
  width: 70px;
  margin-left: 12px;
  text-align: center;
  font-family: "Noto Sans", sans-serif;
  line-height: 18px;
  color: #eee;
}
.notify { position: relative; margin-left: 14px; margin-top: -2px; }
.notify-n {
  position: absolute;
  left: 2px;
  top: 8px;
  width: 20px;
  height: 20px;
  border-radius: 50%;
  background: #444;
  border: 1px solid #ddd;
  text-align: center;
  font-size: 11px;
  line-height: 18px;
  font-family: "Noto Sans", sans-serif;
}

/* floating param panel */
.param {
  position: absolute;
  left: 1075px;
  top: 420px;
  width: 269px;
  height: 282px;
  border: 1px solid #555;
  background: linear-gradient(#b8c8d8, #d4e2f0 20%, #d4e2f0);
  padding: 9px 8px 0 8px;
  font-family: "Noto Sans CJK SC", sans-serif;
}
.param-title { height: 21px; color: #999; }
.param-fig { display: block; border: 1px solid #eee; box-sizing: content-box; }
.fig-num { font: 54px "Liberation Mono", monospace; }
.fig-cjk { font: 46px "Noto Sans CJK SC", sans-serif; }
.fig-label { font: 66px "Liberation Serif", serif; }

/* polygon editor */
.editor {
  position: absolute;
  left: 308px;
  top: 59px;
  width: 751px;
  height: 644px;
  background: #f0f0f0;
  box-shadow: 1px 2px 5px rgba(0, 0, 0, .45);
  display: flex;
  flex-direction: column;
  font-family: "Noto Sans CJK SC", sans-serif;
}
.ed-title {
  height: 30px;
  flex: none;
  background: #fff;
  color: #999;
  padding: 6px 0 0 8px;
  position: relative;
}
.ed-close {
  position: absolute;
  right: 2px;
  top: 10px;
  width: 18px;
  height: 18px;
  background: #e5e5e5;
  color: #fff;
  text-align: center;
  line-height: 16px;
}
.ed-tools {
  height: 28px;
  flex: none;
  display: flex;
  align-items: center;
  gap: 7px;
  padding-left: 4px;
  background: #f0f0f0;
}
.ed-tools .sep { margin: 0 -1px; }
.grip {
  width: 2px;
  height: 18px;
  border-left: 2px dotted #999;
  margin-right: -2px;
}
.tool {
  display: flex;
  align-items: center;
  gap: 4px;
  white-space: nowrap;
}
.tool.off { color: #888; }
.ed-opts {
  height: 28px;
  flex: none;
  display: flex;
  align-items: center;
  padding-left: 9px;
  background: #f7f7f7;
}
.radio {
  width: 11px;
  height: 11px;
  border: 1px solid #888;
  border-radius: 50%;
  background: #fff;
  flex: none;
  position: relative;
}
.radio.on::after {
  content: "";
  position: absolute;
  left: 2px;
  top: 2px;
  width: 5px;
  height: 5px;
  border-radius: 50%;
  background: #222;
}
.opt { margin: 0 10px 0 9px; }
.opt.tight { margin-right: 6px; }
.ed-opts .sep { margin: 0 7px 0 0; }
.xy { font-family: "Noto Sans", sans-serif; }
.spin {
  width: 78px;
  height: 22px;
  margin: 0 5px 0 9px;
  background: #fff;
  border: 1px solid #888;
  text-align: right;
  line-height: 20px;
  color: #555;
  padding-right: 17px;
  position: relative;
}
.y-label { margin-left: 13px; }
.spin-btns {
  position: absolute;
  right: 4px;
  top: 4px;
  display: flex;
  flex-direction: column;
  gap: 4px;
}
.up, .down {
  width: 0;
  height: 0;
  border: 3px solid transparent;
}
.up { border-bottom: 4px solid #666; border-top: 0; }
.down { border-top: 4px solid #666; border-bottom: 0; }
.ed-canvas { display: block; flex: none; }
.dim-green { font: bold 14px "Liberation Mono", monospace; }
.dim-gray { font: 11px "Liberation Mono", monospace; }
.ed-dyn {
  height: 28px;
  flex: none;
  padding: 2px 0 0 2px;
  border-bottom: 1px solid #aaa;
}
.dyn-btn {
  display: block;
  width: 57px;
  height: 22px;
  background: #e5f1fb;
  border: 1px solid #0078d7;
  text-align: center;
  line-height: 20px;
}
.ed-actions {
  height: 42px;
  flex: none;
  display: flex;
  justify-content: flex-end;
  align-items: center;
  gap: 15px;
  padding: 0 13px 2px 0;
}
.btn {
  display: block;
  height: 22px;
  background: #e1e1e1;
  border: 1px solid #adadad;
  text-align: center;
  line-height: 20px;
  flex: none;
}
.b-ok { width: 72px; }
.b-cad1 { width: 106px; margin-right: 7px; }
.b-cad2 { width: 112px; margin-right: 11px; }
.ed-status {
  height: 20px;
  flex: none;
  display: flex;
  gap: 3px;
  background: #fafafa;
  position: relative;
}
.ed-status .cell { border: 0; padding-left: 2px; line-height: 20px; }
.e-a { width: 147px; }
.ed-status .e-b { width: 147px; border-left: 1px solid #ddd; }
.ed-status .e-c { flex: 1; border-left: 1px solid #ddd; }
.size-grip { position: absolute; right: 2px; bottom: 1px; }

/* dialog */
.dialog {
  position: absolute;
  left: 151px;
  top: 205px;
  width: 411px;
  height: 222px;
  border: 1px solid #3a8ad8;
  background: #f0f0f0;
  font-family: "Noto Sans CJK SC", sans-serif;
}
.dlg-title {
  height: 25px;
  background: #fff;
  display: flex;
  justify-content: space-between;
  align-items: center;
  padding: 0 9px 4px 3px;
}
.dlg-body { padding: 14px 13px 0 13px; }
.grp {
  margin: 0 0 9px 0;
  padding: 0 9px 0 7px;
  height: 64px;
  border: 1px solid #ddd;
}
.grp legend {
  padding: 0;
  line-height: 14px;
  white-space: nowrap;
}
.area {
  height: 41px;
  background: #fff;
  border: 1px solid #7a7a7a;
  padding: 2px 2px;
  margin-top: 1px;
  font-family: "DejaVu Sans Mono", monospace;
  font-size: 10px;
  line-height: 12px;
}
.picked { background: #0078d7; color: #fff; padding: 0 0 0 1px; }
.dlg-btns {
  display: flex;
  justify-content: flex-end;
  gap: 15px;
  margin: 4px 1px 0 0;
}

/* red hand marks */
.marks {
  position: absolute;
  left: 0;
  top: 0;
  pointer-events: none;
}
.marks ellipse {
  fill: none;
  stroke: #f00;
  stroke-width: 8;
}

/* green widget and input method bar */
.badge {
  position: absolute;
  left: 920px;
  top: -15px;
  width: 42px;
  height: 34px;
  border-radius: 0 0 21px 21px;
  background: linear-gradient(#2bb34a, #54cf68);
  border: 2px solid #bbb;
  border-top: 0;
  color: #fff;
  text-align: center;
  padding-top: 15px;
  font: bold 12px "Noto Sans", sans-serif;
}
.ime {
  position: absolute;
  left: 1003px;
  top: 3px;
  display: flex;
  align-items: center;
}
.ime-s {
  width: 24px;
  height: 24px;
  border-radius: 5px;
  background: #ea5a20;
  color: #fff;
  font: bold 22px/24px "Liberation Sans", sans-serif;
  text-align: center;
  transform: rotate(-6deg);
  position: relative;
  z-index: 1;
}
.ime-bar {
  width: 183px;
  height: 23px;
  margin-left: -3px;
  background: #fff;
  border: 1px solid #b8d0e4;
  display: flex;
  align-items: center;
  gap: 8px;
  padding-left: 10px;
  color: #1b76c5;
  font-family: "Noto Sans CJK SC", sans-serif;
}
.ime-bar b { font-size: 13px; }
.ime-dot { font-family: "Liberation Sans", sans-serif; }
.ime-smile { margin-left: 4px; }
```
